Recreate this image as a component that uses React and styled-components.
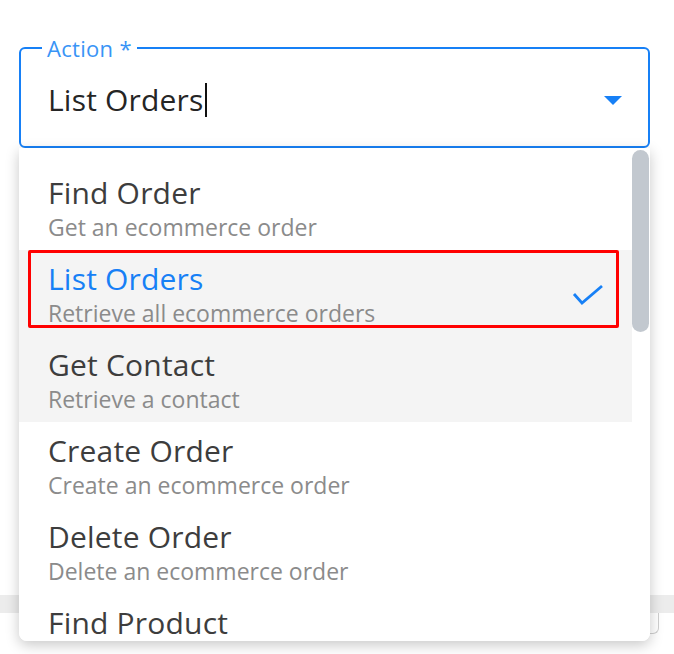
import styled, { createGlobalStyle } from 'styled-components'

const Global = createGlobalStyle`
  html, body {
    margin: 0;
    padding: 0;
    background: #ffffff;
    font-family: "Open Sans", "Noto Sans", sans-serif;
  }
`

const blue = '#1780f6'

export const Page = styled.div`
  position: relative;
  width: 674px;
  height: 654px;
  overflow: hidden;
  padding-top: 35px;
  box-sizing: border-box;
`

export const Field = styled.fieldset`
  margin: 0 24px 0 19px;
  padding: 0 26px 0 27px;
  height: 113px;
  box-sizing: border-box;
  border: 2px solid ${blue};
  border-radius: 6px;
  display: flex;
  align-items: center;
  justify-content: space-between;
`

export const Legend = styled.legend`
  margin-left: -6px;
  padding: 0 5px;
  font-size: 22px;
  line-height: 26px;
  letter-spacing: 0.3px;
  color: #3994f6;
`

export const Value = styled.div`
  display: flex;
  align-items: center;
  font-size: 30px;
  letter-spacing: 0.2px;
  color: #252525;
  margin-top: -8px;
`

export const Caret = styled.span`
  display: inline-block;
  width: 2px;
  height: 34px;
  background: #111;
  margin-left: 1px;
`

export const Arrow = styled.span`
  width: 0;
  height: 0;
  border-left: 9px solid transparent;
  border-right: 9px solid transparent;
  border-top: 9px solid ${blue};
  margin-top: -6px;
`

export const Backdrop = styled.div`
  margin-top: 447px;
`

export const Strip = styled.div`
  height: 18px;
  background: #ececec;
`

export const Card = styled.div`
  margin: 0 15px 0 19px;
  height: 20px;
  border: 1px solid #cfcfcf;
  border-top: none;
  border-radius: 0 0 6px 6px;
`

export const Menu = styled.div`
  position: absolute;
  top: 148px;
  left: 19px;
  width: 631px;
  height: 493px;
  background: #fff;
  border-radius: 0 0 8px 8px;
  box-shadow: 0 4px 14px rgba(0, 0, 0, 0.22);
  overflow: hidden;
  display: flex;
`

export const List = styled.div`
  flex: 1;
  padding-top: 16px;
`

export const Item = styled.div`
  position: relative;
  height: 86px;
  box-sizing: border-box;
  padding: 10px 29px 0;
  background: ${p => (p.$shaded ? '#f4f4f4' : '#fff')};
  display: flex;
  align-items: flex-start;
  justify-content: space-between;
`

export const Texts = styled.div`
  display: flex;
  flex-direction: column;
`

export const Title = styled.div`
  font-size: 30px;
  line-height: 38px;
  letter-spacing: 0.2px;
  color: ${p => (p.$active ? blue : '#3d3d3d')};
`

export const Desc = styled.div`
  font-size: 23px;
  line-height: 30px;
  color: #8b8b8b;
`

export const Check = styled.svg`
  margin-top: 24px;
  margin-right: -1px;
`

export const Highlight = styled.div`
  position: absolute;
  top: 0;
  left: 9px;
  width: 591px;
  height: 78px;
  box-sizing: border-box;
  border: 3px solid #ff0000;
  border-radius: 2px;
  pointer-events: none;
`

export const Track = styled.div`
  width: 18px;
  padding-top: 2px;
  background: #fff;
`

export const Thumb = styled.div`
  width: 17px;
  height: 182px;
  border-radius: 9px;
  background: #c2c8cf;
`

const options = [
  { title: 'Find Order', desc: 'Get an ecommerce order' },
  { title: 'List Orders', desc: 'Retrieve all ecommerce orders', active: true },
  { title: 'Get Contact', desc: 'Retrieve a contact', shaded: true },
  { title: 'Create Order', desc: 'Create an ecommerce order' },
  { title: 'Delete Order', desc: 'Delete an ecommerce order' },
  { title: 'Find Product' },
]

const App = () => {
  return (
    <Page>
      <Global />
      <Field>
        <Legend>Action *</Legend>
        <Value>
          List Orders<Caret />
        </Value>
        <Arrow />
      </Field>
      <Backdrop>
        <Strip />
        <Card />
      </Backdrop>
      <Menu>
        <List>
          {options.map(o => (
            <Item key={o.title} $shaded={o.active || o.shaded}>
              <Texts>
                <Title $active={o.active}>{o.title}</Title>
                {o.desc && <Desc>{o.desc}</Desc>}
              </Texts>
              {o.active && (
                <>
                  <Check width="32" height="22" viewBox="0 0 32 22" fill="none">
                    <polyline points="2,10 10,19 30,2" stroke={blue} strokeWidth="2.8" />
                  </Check>
                  <Highlight />
                </>
              )}
            </Item>
          ))}
        </List>
        <Track>
          <Thumb />
        </Track>
      </Menu>
    </Page>
  )
}

export default App
